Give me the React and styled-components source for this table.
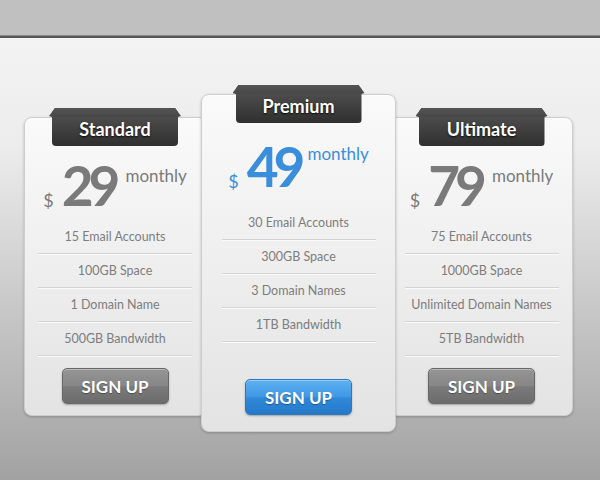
import React from 'react';
import styled, {createGlobalStyle} from 'styled-components';

const GlobalStyle = createGlobalStyle`
    html, body {
        margin: 0;
        padding: 0;
    }
    body {
        width: 600px;
        height: 480px;
        overflow: hidden;
        background: #a3a3a3;
        font-family: Lato, "Open Sans", sans-serif;
    }
`

const Page = styled.div`
    width: 600px;
    height: 480px;
    display: flex;
    flex-direction: column;
`

const TopBar = styled.div`
    flex: none;
    height: 38px;
    background: linear-gradient(#c0c0c0 0 35px, #8a8a8a 35px 36px, #555 36px 38px);
`

const Stage = styled.div`
    flex: 1;
    background: linear-gradient(#f3f3f3 0%, #ececec 25%, #c4c4c4 65%, #a2a2a2 100%);
`

const Row = styled.div`
    display: flex;
    align-items: flex-start;
    padding: 56px 0 0 24px;
`

const Card = styled.div`
    position: relative;
    z-index: ${props => props.$featured ? 2 : 1};
    box-sizing: border-box;
    width: ${props => props.$width}px;
    margin-top: ${props => props.$featured ? 0 : 23}px;
    margin-left: ${props => props.$shift}px;
    padding-bottom: ${props => props.$featured ? 16 : 11}px;
    display: flex;
    flex-direction: column;
    align-items: center;
    background: linear-gradient(#fafafa, #e3e3e3);
    border: 1px solid #cdcdcd;
    border-radius: 8px;
    box-shadow: inset 0 1px 0 #fff, 0 1px 3px rgba(0, 0, 0, 0.22);
`

// dark ribbon label; the little ears overhang the card's top edge
const Tab = styled.div`
    position: relative;
    box-sizing: border-box;
    width: 126px;
    height: 38px;
    margin-top: -10px;
    padding-top: 3px;
    display: flex;
    align-items: center;
    justify-content: center;
    background: linear-gradient(#555, #2f2f2f);
    border-radius: 0 0 4px 4px;
    clip-path: polygon(3px 0, calc(100% - 3px) 0, calc(100% + 3px) 8px, 100% 9px, 100% 100%, 0 100%, 0 9px, -3px 8px);
    color: #fff;
    font: 700 18px Lato, sans-serif;
    text-shadow: 0 1px 2px rgba(0, 0, 0, 0.9);

    &::before {
        content: '';
        position: absolute;
        top: 0;
        left: -3px;
        right: -3px;
        height: 9px;
        background: linear-gradient(#545454, #474747);
    }

    span {
        position: relative;
    }
`

const Price = styled.div`
    display: flex;
    align-items: flex-start;
    justify-content: center;
    height: 56px;
    margin-top: ${props => props.$gap}px;
    color: ${props => props.$blue ? '#3a8edc' : '#7a7a7a'};
`

const Dollar = styled.span`
    align-self: flex-end;
    margin: 0 8px 5px 0;
    font: 400 18px/1 Lato, sans-serif;
`

const Amount = styled.span`
    font: 700 55px/1 Lato, sans-serif;
    letter-spacing: -5px;
`

const Per = styled.span`
    margin: ${props => props.$drop}px 0 0 ${props => props.$space}px;
    font: 400 17px/1 Lato, sans-serif;
`

const Features = styled.ul`
    list-style: none;
    width: 154px;
    margin: ${props => props.$gap}px 0 0;
    padding: 0;
`

const Feature = styled.li`
    height: 33px;
    text-align: center;
    font: 400 12.5px/33px Lato, sans-serif;
    color: #7d7d7d;
    border-bottom: 1px solid #d3d3d3;
    box-shadow: 0 1px 0 #fbfbfb;
`

const SignUp = styled.button`
    width: 107px;
    height: 36px;
    margin-top: ${props => props.$gap}px;
    padding: 0;
    border-radius: 5px;
    border: 1px solid ${props => props.$blue ? '#2b77c0' : '#686868'};
    background: ${props => props.$blue
        ? 'linear-gradient(#5eb1f1, #3f98e4 50%, #3089da 52%, #2679c9)'
        : 'linear-gradient(#959595, #868686 50%, #7a7a7a 52%, #6c6c6c)'};
    color: #fff;
    font: 700 17px Lato, sans-serif;
    text-shadow: 0 1px 1px rgba(0, 0, 0, 0.35);
    box-shadow: inset 0 1px 0 rgba(255, 255, 255, 0.35), 0 1px 2px rgba(0, 0, 0, 0.3);
    cursor: pointer;
`

const plans = [
    {
        name: 'Standard', price: 29, width: 182, shift: 0,
        features: ['15 Email Accounts', '100GB Space', '1 Domain Name', '500GB Bandwidth'],
    },
    {
        name: 'Premium', price: 49, width: 195, shift: -5, featured: true,
        features: ['30 Email Accounts', '300GB Space', '3 Domain Names', '1TB Bandwidth'],
    },
    {
        name: 'Ultimate', price: 79, width: 183, shift: -6,
        features: ['75 Email Accounts', '1000GB Space', 'Unlimited Domain Names', '5TB Bandwidth'],
    },
];

const PlanCard = ({plan}) => {
    const f = plan.featured;
    return (
        <Card $featured={f} $width={plan.width} $shift={plan.shift}>
            <Tab><span>{plan.name}</span></Tab>
            <Price $blue={f} $gap={f ? 16 : 12}>
                <Dollar>$</Dollar>
                <Amount>{plan.price}</Amount>
                <Per $drop={f ? 6 : 9} $space={f ? 7 : 10}>monthly</Per>
            </Price>
            <Features $gap={f ? 11 : 6}>
                {plan.features.map(item => <Feature key={item}>{item}</Feature>)}
            </Features>
            <SignUp $blue={f} $gap={f ? 37 : 12}>SIGN UP</SignUp>
        </Card>
    );
};

const App = () => {
    return (
        <Page>
            <GlobalStyle/>
            <TopBar/>
            <Stage>
                <Row>
                    {plans.map(plan => <PlanCard key={plan.name} plan={plan}/>)}
                </Row>
            </Stage>
        </Page>
    );
};

export default App;
